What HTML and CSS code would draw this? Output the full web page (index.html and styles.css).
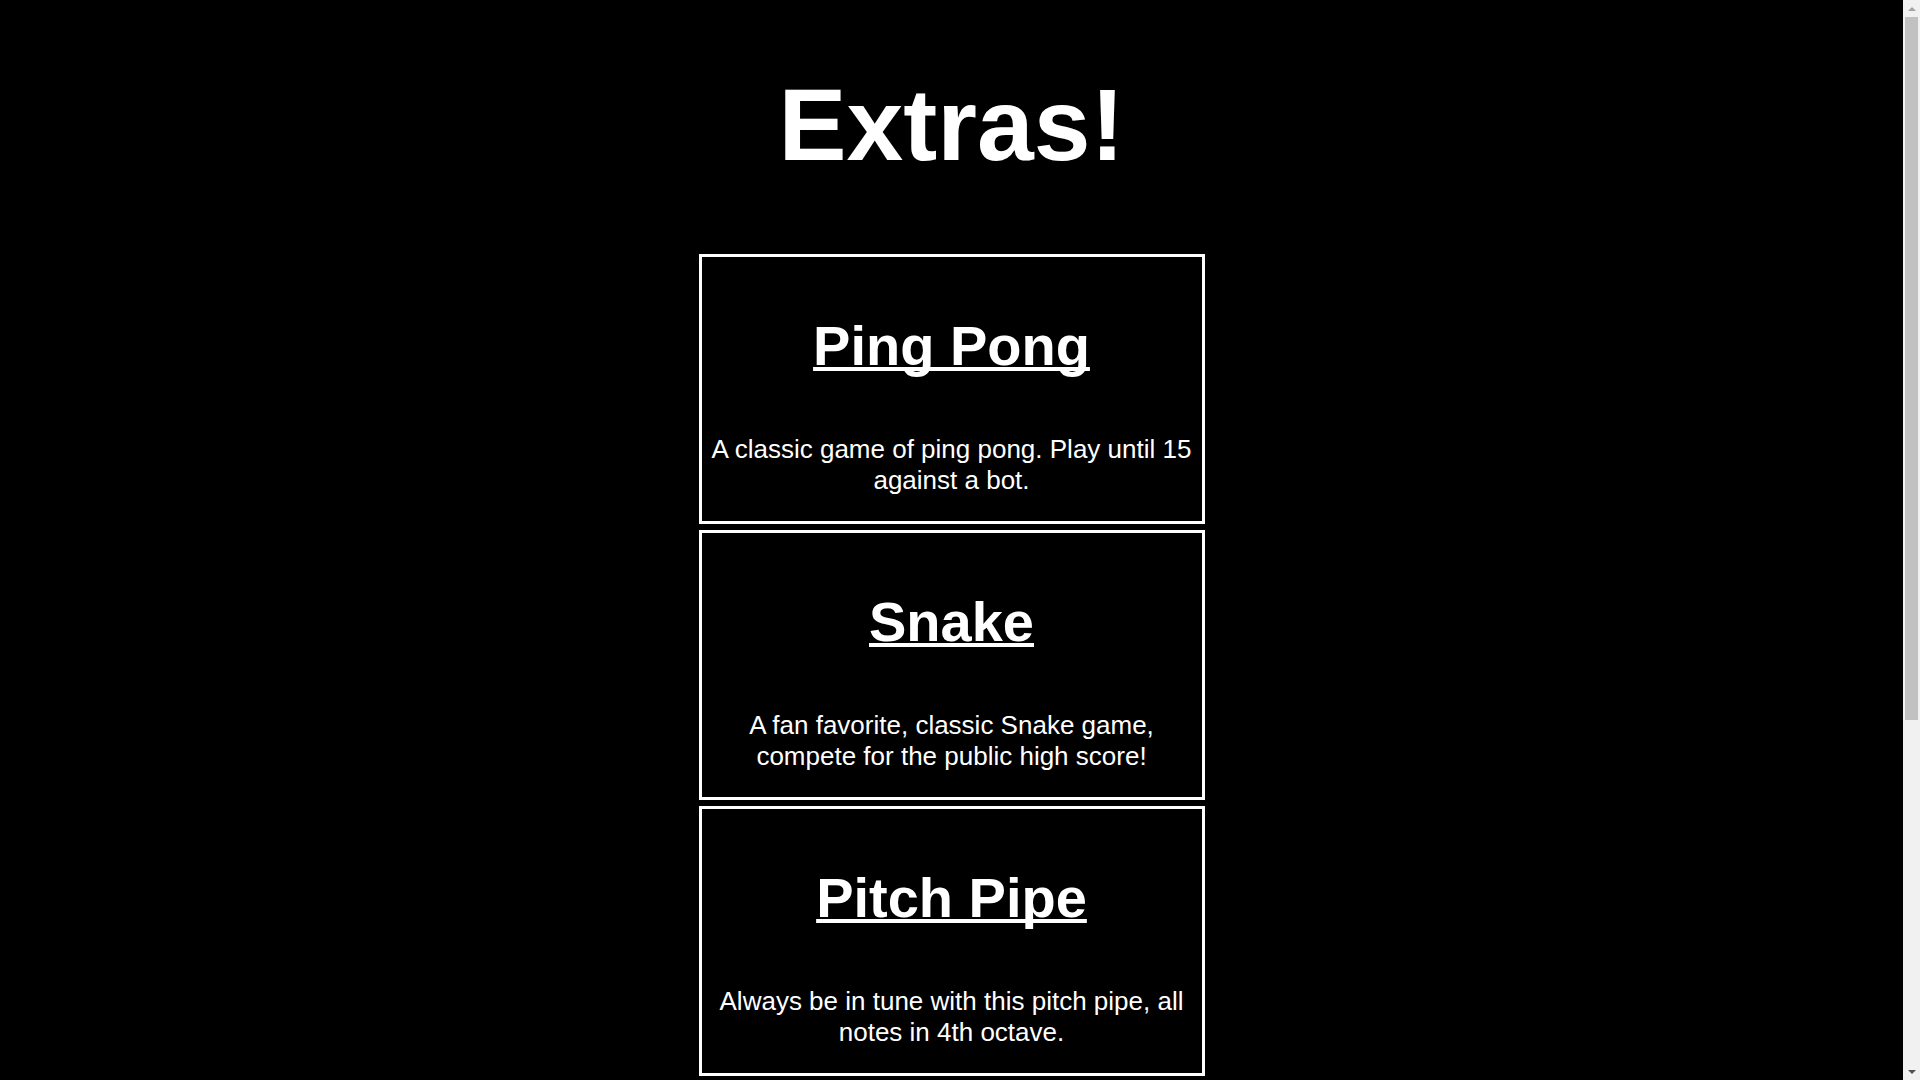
FILE: index.html
```html
<!DOCTYPE html>
<html lang="en">
  <head>
    <meta charset="UTF-8" />
    <meta name="viewport" content="width=device-width, initial-scale=1.0" />
    <title>Extras</title>
    <link rel="stylesheet" href="styles.css">
  </head>
  <body>
    <h1 id="title">Extras!</h1>
    <div id="extras">
      <div class="card">
        <h3 class="cardTitle"><a class="cardLink" href="/pingpong">Ping Pong</a></h3>
        <p class="cardText">A classic game of ping pong. Play until 15 against a bot.</p>
      </div>
      <div class="card">
        <h3 class="cardTitle"><a class="cardLink" href="/snake">Snake</a></h3>
        <p class="cardText">A fan favorite, classic Snake game, compete for the public high score!</p>
      </div>
      <div class="card">
        <h3 class="cardTitle"><a class="cardLink" href="/pitchpipe">Pitch Pipe</a></h3>
        <p class="cardText">Always be in tune with this pitch pipe, all notes in 4th octave.</p>
      </div>
    </div>
    <!-- window scrollbar -->
    <div id="scrollbar">
      <div class="arrow up"></div>
      <div id="track"><div id="thumb"></div></div>
      <div class="arrow down"></div>
    </div>
  </body>
</html>
```
FILE: styles.css
```css
body {
  margin: 0;
  padding-right: 17px;
  background-color: #000000;
  color: #ffffff;
  font-family: "Liberation Sans", Arial, sans-serif;
  text-align: center;
}
#title {
  font-size: 102px;
  margin: 67px 0 70px;
}
#extras {
  display: flex;
  flex-direction: column;
  align-items: center;
  gap: 6px;
  padding-bottom: 531px;
}
.card {
  width: 500px;
  border: 3px solid #ffffff;
}
.cardTitle {
  font-size: 56px;
  margin: 56px 0;
}
.cardLink {
  color: #ffffff;
  text-decoration-thickness: 4px;
  text-decoration-skip-ink: none;
}
.cardText {
  font-size: 26px;
  margin: 26px 4px 25px;
}
a:hover {
  opacity: 0.85;
  cursor: pointer;
}
#scrollbar {
  position: fixed;
  top: 0;
  right: 0;
  width: 17px;
  height: 100vh;
  background-color: #f1f1f1;
  display: flex;
  flex-direction: column;
  align-items: center;
}
.arrow {
  width: 17px;
  height: 17px;
  display: flex;
  align-items: center;
  justify-content: center;
}
.arrow::after {
  content: "";
  border-left: 4px solid transparent;
  border-right: 4px solid transparent;
}
.arrow.up::after {
  border-bottom: 4px solid #a3a3a3;
}
.arrow.down::after {
  border-top: 4px solid #505050;
}
#track {
  flex: 1;
  width: 100%;
  padding: 0 2px;
  box-sizing: border-box;
}
#thumb {
  height: 703px;
  background-color: #c1c1c1;
}
```
